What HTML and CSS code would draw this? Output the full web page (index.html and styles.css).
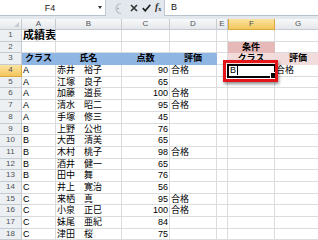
FILE: index.html
```html
<!DOCTYPE html>
<html lang="ja">
<head>
    <meta charset="UTF-8">
    <title>成績表</title>
    <link rel="stylesheet" href="styles.css">
</head>
<body>
<div class="top">
    <div class="namebox"><span class="ref">F4</span><span class="drop"></span></div>
    <div class="tools">
        <svg class="grip" width="12" height="13" viewBox="0 0 12 13"><path d="M9 1.5A5 5 0 1 0 9 11.5" fill="none" stroke="#b9c0c9" stroke-width="1.2"/><circle cx="6" cy="6.5" r="1" fill="#a3abb5"/></svg>
        <svg class="ico" width="8" height="8" viewBox="0 0 8 8"><path d="M1 1L7 7M7 1L1 7" stroke="#333" stroke-width="1.6"/></svg>
        <svg class="ico" width="9" height="8" viewBox="0 0 9 8"><path d="M0.8 4.2L3.2 6.8L8.3 0.8" fill="none" stroke="#222" stroke-width="1.7"/></svg>
        <span class="fx"><i>f</i><sub>x</sub></span>
    </div>
    <div class="formula">B</div>
</div>
<div class="sheet">
    <div class="corner"></div><div class="ch">A</div><div class="ch">B</div><div class="ch">C</div><div class="ch">D</div><div class="ch">E</div><div class="ch on">F</div><div class="ch">G</div>

    <div class="rh">1</div><div class="c title">成績表</div><div class="c"></div><div class="c"></div><div class="c"></div><div class="c"></div><div class="c"></div><div class="c"></div>
    <div class="rh">2</div><div class="c"></div><div class="c"></div><div class="c"></div><div class="c"></div><div class="c"></div><div class="c hd pink">条件</div><div class="c"></div>
    <div class="rh">3</div><div class="c hd blue">クラス</div><div class="c hd blue">氏名</div><div class="c hd blue">点数</div><div class="c hd blue">評価</div><div class="c"></div><div class="c hd rose">クラス</div><div class="c hd rose">評価</div>
    <div class="rh on">4</div><div class="c">A</div><div class="c">赤井　裕子</div><div class="c num">90</div><div class="c">合格</div><div class="c"></div><div class="c act">B<span class="caret"></span></div><div class="c">合格</div>
    <div class="rh">5</div><div class="c">A</div><div class="c">江塚　良子</div><div class="c num">65</div><div class="c"></div><div class="c"></div><div class="c"></div><div class="c"></div>
    <div class="rh">6</div><div class="c">A</div><div class="c">加藤　道長</div><div class="c num">100</div><div class="c">合格</div><div class="c"></div><div class="c"></div><div class="c"></div>
    <div class="rh">7</div><div class="c">A</div><div class="c">清水　昭二</div><div class="c num">95</div><div class="c">合格</div><div class="c"></div><div class="c"></div><div class="c"></div>
    <div class="rh">8</div><div class="c">A</div><div class="c">手塚　修三</div><div class="c num">45</div><div class="c"></div><div class="c"></div><div class="c"></div><div class="c"></div>
    <div class="rh">9</div><div class="c">B</div><div class="c">上野　公也</div><div class="c num">76</div><div class="c"></div><div class="c"></div><div class="c"></div><div class="c"></div>
    <div class="rh">10</div><div class="c">B</div><div class="c">大西　清美</div><div class="c num">65</div><div class="c"></div><div class="c"></div><div class="c"></div><div class="c"></div>
    <div class="rh">11</div><div class="c">B</div><div class="c">木村　桃子</div><div class="c num">98</div><div class="c">合格</div><div class="c"></div><div class="c"></div><div class="c"></div>
    <div class="rh">12</div><div class="c">B</div><div class="c">酒井　健一</div><div class="c num">65</div><div class="c"></div><div class="c"></div><div class="c"></div><div class="c"></div>
    <div class="rh">13</div><div class="c">B</div><div class="c">田中　舞</div><div class="c num">76</div><div class="c"></div><div class="c"></div><div class="c"></div><div class="c"></div>
    <div class="rh">14</div><div class="c">C</div><div class="c">井上　寛治</div><div class="c num">56</div><div class="c"></div><div class="c"></div><div class="c"></div><div class="c"></div>
    <div class="rh">15</div><div class="c">C</div><div class="c">来栖　真</div><div class="c num">95</div><div class="c">合格</div><div class="c"></div><div class="c"></div><div class="c"></div>
    <div class="rh">16</div><div class="c">C</div><div class="c">小泉　正巳</div><div class="c num">100</div><div class="c">合格</div><div class="c"></div><div class="c"></div><div class="c"></div>
    <div class="rh">17</div><div class="c">C</div><div class="c">妹尾　亜紀</div><div class="c num">84</div><div class="c"></div><div class="c"></div><div class="c"></div><div class="c"></div>
    <div class="rh">18</div><div class="c">C</div><div class="c">津田　桜</div><div class="c num">75</div><div class="c"></div><div class="c"></div><div class="c"></div><div class="c"></div>
</div>
<div class="callout"></div>
</body>
</html>
```

FILE: styles.css
```css
html,body{
    margin: 0;
    padding: 0;
    width: 318px;
    height: 240px;
    overflow: hidden;
    background: #fff;
}
body{
    position: relative;
    font-family: "Liberation Sans", "Noto Sans CJK JP", sans-serif;
    color: #000;
}
*{
    box-sizing: border-box;
}

/* formula bar */
.top{
    height: 19px;
    display: flex;
    align-items: flex-start;
    background: #e3e8ee;
}
.namebox{
    width: 106px;
    height: 16px;
    background: #fff;
    border-bottom: 1px solid #b9c1cb;
    border-right: 1px solid #c3cad3;
    display: flex;
    align-items: center;
    position: relative;
}
.namebox .ref{
    flex: 1;
    text-align: center;
    font-size: 9px;
    color: #222;
    padding-left: 2px;
}
.namebox .drop{
    width: 0;
    height: 0;
    border-left: 2px solid transparent;
    border-right: 2px solid transparent;
    border-top: 3px solid #333;
    margin-right: 3px;
}
.tools{
    width: 58px;
    height: 16px;
    display: flex;
    align-items: center;
    gap: 4px;
    padding-left: 6px;
}
.tools .grip{
    margin-right: 2px;
}
.fx{
    font-family: "Liberation Serif", serif;
    font-size: 10px;
    font-weight: bold;
    color: #333;
    line-height: 10px;
}
.fx sub{
    font-size: 6px;
    vertical-align: -1px;
}
.formula{
    flex: 1;
    height: 16px;
    background: #fff;
    border-left: 1px solid #c3cad3;
    border-bottom: 1px solid #b9c1cb;
    font-size: 9px;
    line-height: 15px;
    padding-left: 6px;
    color: #111;
}

/* sheet */
.sheet{
    display: grid;
    grid-template-columns: 22px 34px 66px 48px 47px 11px 47px 47px;
    grid-template-rows: 11px repeat(18, 11.7px);
    width: 322px;
}
.corner,.ch,.rh{
    background: linear-gradient(#f8f9fa, #e4e7eb);
    border-right: 1px solid #c6cbd2;
    border-bottom: 1px solid #c6cbd2;
    color: #4f5358;
    font-size: 8px;
    text-align: center;
}
.corner{
    position: relative;
}
.corner:after{
    content: '';
    position: absolute;
    right: 2px;
    bottom: 2px;
    border-left: 5px solid transparent;
    border-bottom: 5px solid #c8ccd1;
}
.ch{
    line-height: 10px;
}
.rh{
    background: #edf0f3;
    line-height: 10.7px;
}
.ch.on{
    background: linear-gradient(#fbe4a0, #f3c65c);
    border-color: #d9a93e;
    border-left: 1px solid #d9a93e;
}
.rh.on{
    background: linear-gradient(#fbe4a0, #f3c65c);
    border-color: #d9a93e;
}
.c{
    border-right: 1px solid #dadcdd;
    border-bottom: 1px solid #dadcdd;
    font-size: 9px;
    line-height: 10.7px;
    padding: 0 1px;
    white-space: nowrap;
    overflow: hidden;
}
.c.num{
    text-align: right;
}
.c.title{
    font-size: 11px;
    font-weight: bold;
    overflow: visible;
    border-right-color: #dadcdd;
}
.c.hd{
    font-weight: bold;
    text-align: center;
}
.blue{
    background: #8fb5e3;
    border-color: #8fb5e3;
}
.pink{
    background: #e6b8b7;
    border-color: #e6b8b7;
}
.rose{
    background: #f2dcdb;
    border-color: #f2dcdb;
}
.c.act{
    position: relative;
    z-index: 1;
    overflow: visible;
    outline: 2px solid #000;
    outline-offset: -1px;
    padding-left: 2px;
}
.c.act:after{
    content: '';
    position: absolute;
    right: -3px;
    bottom: -3px;
    width: 5px;
    height: 5px;
    background: #000;
    border: 1px solid #fff;
}
.caret{
    display: inline-block;
    width: 1px;
    height: 9px;
    background: #000;
    vertical-align: -2px;
    margin-left: 1px;
}

/* annotation */
.callout{
    position: absolute;
    left: 223px;
    top: 60px;
    width: 55px;
    height: 22px;
    border: 3px solid #e3151b;
    box-shadow: 1px 2px 3px rgba(0,0,0,.45);
    z-index: 2;
}
```
